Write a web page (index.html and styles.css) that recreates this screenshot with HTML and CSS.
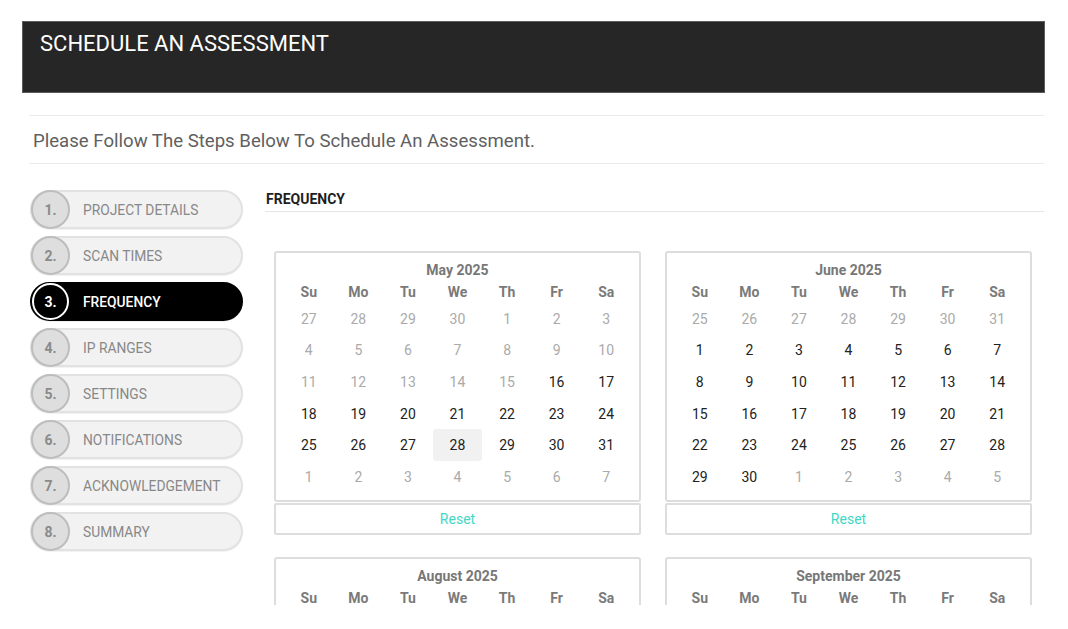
FILE: index.html
```html
<!DOCTYPE html>
<html>
<head>
<meta charset="utf-8">
<link rel="stylesheet" href="styles.css">
</head>
<body>
<div class="header"><h1 class="title">SCHEDULE AN ASSESSMENT</h1></div>
<div class="wrap">
  <div class="intro">Please Follow The Steps Below To Schedule An Assessment.</div>
  <div class="body">
    <ul class="steps">
      <li class="step"><span class="num">1.</span><span class="label">PROJECT DETAILS</span></li>
      <li class="step"><span class="num">2.</span><span class="label">SCAN TIMES</span></li>
      <li class="step active"><span class="num">3.</span><span class="label">FREQUENCY</span></li>
      <li class="step"><span class="num">4.</span><span class="label">IP RANGES</span></li>
      <li class="step"><span class="num">5.</span><span class="label">SETTINGS</span></li>
      <li class="step"><span class="num">6.</span><span class="label">NOTIFICATIONS</span></li>
      <li class="step"><span class="num">7.</span><span class="label">ACKNOWLEDGEMENT</span></li>
      <li class="step"><span class="num">8.</span><span class="label">SUMMARY</span></li>
    </ul>
    <div class="main">
      <h2 class="section">FREQUENCY</h2>
      <div class="calendars">
        <div class="month">
          <div class="card">
            <div class="mtitle">May 2025</div>
            <div class="grid">
              <span class="wd">Su</span><span class="wd">Mo</span><span class="wd">Tu</span><span class="wd">We</span><span class="wd">Th</span><span class="wd">Fr</span><span class="wd">Sa</span>
              <span class="d o">27</span><span class="d o">28</span><span class="d o">29</span><span class="d o">30</span><span class="d o">1</span><span class="d o">2</span><span class="d o">3</span>
              <span class="d o">4</span><span class="d o">5</span><span class="d o">6</span><span class="d o">7</span><span class="d o">8</span><span class="d o">9</span><span class="d o">10</span>
              <span class="d o">11</span><span class="d o">12</span><span class="d o">13</span><span class="d o">14</span><span class="d o">15</span><span class="d">16</span><span class="d">17</span>
              <span class="d">18</span><span class="d">19</span><span class="d">20</span><span class="d">21</span><span class="d">22</span><span class="d">23</span><span class="d">24</span>
              <span class="d">25</span><span class="d">26</span><span class="d">27</span><span class="d today">28</span><span class="d">29</span><span class="d">30</span><span class="d">31</span>
              <span class="d o">1</span><span class="d o">2</span><span class="d o">3</span><span class="d o">4</span><span class="d o">5</span><span class="d o">6</span><span class="d o">7</span>
            </div>
          </div>
          <div class="reset">Reset</div>
        </div>
        <div class="month">
          <div class="card">
            <div class="mtitle">June 2025</div>
            <div class="grid">
              <span class="wd">Su</span><span class="wd">Mo</span><span class="wd">Tu</span><span class="wd">We</span><span class="wd">Th</span><span class="wd">Fr</span><span class="wd">Sa</span>
              <span class="d o">25</span><span class="d o">26</span><span class="d o">27</span><span class="d o">28</span><span class="d o">29</span><span class="d o">30</span><span class="d o">31</span>
              <span class="d">1</span><span class="d">2</span><span class="d">3</span><span class="d">4</span><span class="d">5</span><span class="d">6</span><span class="d">7</span>
              <span class="d">8</span><span class="d">9</span><span class="d">10</span><span class="d">11</span><span class="d">12</span><span class="d">13</span><span class="d">14</span>
              <span class="d">15</span><span class="d">16</span><span class="d">17</span><span class="d">18</span><span class="d">19</span><span class="d">20</span><span class="d">21</span>
              <span class="d">22</span><span class="d">23</span><span class="d">24</span><span class="d">25</span><span class="d">26</span><span class="d">27</span><span class="d">28</span>
              <span class="d">29</span><span class="d">30</span><span class="d o">1</span><span class="d o">2</span><span class="d o">3</span><span class="d o">4</span><span class="d o">5</span>
            </div>
          </div>
          <div class="reset">Reset</div>
        </div>
        <div class="month">
          <div class="card">
            <div class="mtitle">August 2025</div>
            <div class="grid">
              <span class="wd">Su</span><span class="wd">Mo</span><span class="wd">Tu</span><span class="wd">We</span><span class="wd">Th</span><span class="wd">Fr</span><span class="wd">Sa</span>
            </div>
          </div>
        </div>
        <div class="month">
          <div class="card">
            <div class="mtitle">September 2025</div>
            <div class="grid">
              <span class="wd">Su</span><span class="wd">Mo</span><span class="wd">Tu</span><span class="wd">We</span><span class="wd">Th</span><span class="wd">Fr</span><span class="wd">Sa</span>
            </div>
          </div>
        </div>
      </div>
    </div>
  </div>
</div>
</body>
</html>
```

FILE: styles.css
```css
* { box-sizing: border-box; }
html, body { margin: 0; padding: 0; background: #fff; }
body { font-family: Roboto, "Liberation Sans", Arial, sans-serif; color: #222; }

.header {
  margin: 21px 23px 0 22px;
  height: 72px;
  background: #262626;
  border: 1px solid #5c5c5c;
  padding: 9px 17px 0;
}
.title {
  margin: 0;
  font-size: 22px;
  line-height: 26px;
  font-weight: 400;
  color: #fff;
}

.wrap { padding: 0 24px 0 29px; }

.intro {
  margin-top: 22px;
  border-top: 1px solid #ebebeb;
  border-bottom: 1px solid #ebebeb;
  height: 49px;
  padding: 1px 4px 0;
  font-size: 18.6px;
  line-height: 49px;
  color: #5f5f5f;
}

.body {
  display: flex;
  gap: 22px;
  margin-top: 26px;
}

.steps {
  list-style: none;
  margin: 0;
  padding: 0 0 0 1px;
  width: 214px;
  flex: none;
  display: flex;
  flex-direction: column;
  gap: 7px;
}
.step {
  display: flex;
  align-items: center;
  height: 39px;
  background: #f2f2f2;
  border: 2px solid #e2e2e2;
  border-radius: 20px;
  box-shadow: 0 1px 1px rgba(0,0,0,0.06);
}
.num {
  width: 39px;
  height: 39px;
  margin: -2px 0 -2px -1px;
  flex: none;
  border-radius: 50%;
  border: 2px solid #bdbdbd;
  background: #dedede;
  display: flex;
  align-items: center;
  justify-content: center;
  font-size: 14px;
  font-weight: 700;
  color: #8a8a8a;
}
.label {
  margin-left: 13px;
  font-size: 13.8px;
  color: #888;
}
.step.active { background: #000; border-color: #000; }
.step.active .num { background: #000; border-color: #fff; color: #fff; margin-left: 0; width: 37px; height: 37px; margin-right: 1px; }
.step.active .label { color: #fff; font-weight: 500; }

.main { flex: 1; min-width: 0; }
.section {
  margin: 0;
  font-size: 14px;
  line-height: 18px;
  font-weight: 700;
  color: #1e1e1e;
  padding: 0 1px 3px;
  border-bottom: 1px solid #e6e6e6;
}

.calendars {
  margin-top: 39px;
  padding-left: 9px;
  height: 354px;
  overflow: hidden;
  display: grid;
  grid-template-columns: 367px 367px;
  column-gap: 24px;
  row-gap: 22px;
  align-content: start;
}

.card {
  border: 2px solid #dddddd;
  border-radius: 3px;
  padding: 6px 8px 7px;
}
.mtitle {
  text-align: center;
  font-size: 14px;
  line-height: 22px;
  font-weight: 700;
  color: #777;
}
.grid {
  display: grid;
  grid-template-columns: repeat(7, 1fr);
  grid-auto-rows: 31.6px;
  grid-template-rows: 22px;
}
.wd, .d {
  display: flex;
  align-items: center;
  justify-content: center;
  font-size: 14px;
}
.wd { font-weight: 700; color: #7a7a7a; }
.d { color: #222; }
.d.o { color: #aaaaaa; }
.d.today { background: #f1f1f1; border-radius: 3px; }

.reset {
  margin-top: 1px;
  height: 32px;
  border: 2px solid #dddddd;
  border-radius: 2px;
  display: flex;
  align-items: center;
  justify-content: center;
  font-size: 14px;
  color: #3fd8c4;
}
```
